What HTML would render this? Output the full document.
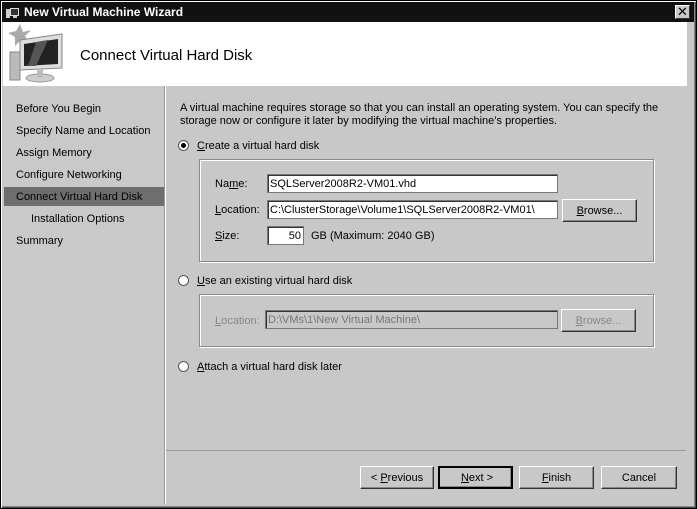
<!DOCTYPE html>
<html><head><style>
*{margin:0;padding:0;box-sizing:border-box}
body{width:697px;height:509px;background:#c8c8c8;font-family:"Liberation Sans","DejaVu Sans",sans-serif;font-size:11px;color:#000;position:relative;overflow:hidden}
.a{position:absolute}
.frame{left:0;top:0;width:697px;height:509px;border:1px solid #000;box-shadow:inset 1px 1px 0 #fff,inset -1px -1px 0 #444,inset -2px -2px 0 #888}
.title{left:2px;top:2px;width:692px;height:20px;background:#111;color:#fff;font-weight:bold;font-size:12px;line-height:21px;padding-left:22px}
.hdr{left:3px;top:22px;width:684px;height:64px;background:#fff}
.side{left:4px;top:86px;width:160px;height:418px;background:#c9c9c9}
.vd{left:164px;top:86px;width:2px;height:418px;background:#fff;border-left:1px solid #999}
.nav{left:16px}
.sel{left:4px;top:187px;width:160px;height:19px;background:#6e6e6e}
.inp{background:#fff;border:1px solid #777;box-shadow:inset 1px 1px 0 #333;height:19px;padding-left:2px;line-height:18px;font-size:11px}
.btn{background:#c8c8c8;border:1px solid;border-color:#fff #333 #333 #fff;box-shadow:inset -1px -1px 0 #888;text-align:center;line-height:22px;height:23px;font-size:11px}
.grp{border:1px solid #888;box-shadow:1px 1px 0 #fff,inset 1px 1px 0 #fff}
.rad{width:11px;height:11px;border-radius:50%;background:#fff;border:1px solid #555}
u{text-decoration:underline}
</style></head><body>
<div class="a frame"></div>
<div class="a title">New Virtual Machine Wizard</div>
<svg class="a" style="left:5px;top:5px" width="16" height="15"><rect x="1" y="4" width="4" height="9" fill="#ccc"/><rect x="5" y="3" width="9" height="8" fill="#ddd"/><rect x="6" y="4" width="7" height="6" fill="#333"/><rect x="8" y="11" width="4" height="2" fill="#ccc"/></svg>
<div class="a" style="left:675px;top:5px;width:15px;height:14px;background:#c8c8c8;border:1px solid;border-color:#fff #333 #333 #fff;font-size:13px;line-height:11px;text-align:center;font-weight:bold">✕</div>
<div class="a hdr"></div>
<svg class="a" style="left:6px;top:22px" width="60" height="62">
<polygon points="14,2 17,10 25,8 19,14 23,21 15,18 9,24 9,15 2,11 10,9" fill="#aaa"/>
<rect x="4" y="30" width="10" height="28" fill="#bbb" stroke="#888"/>
<polygon points="14,18 56,12 56,46 14,48" fill="#ddd" stroke="#888"/>
<polygon points="18,22 52,17 52,42 18,44" fill="#222"/>
<polygon points="30,20 42,18 30,44 22,44" fill="#555"/>
<ellipse cx="34" cy="56" rx="14" ry="4" fill="#ccc" stroke="#999"/>
<rect x="31" y="47" width="6" height="8" fill="#bbb"/>
</svg>
<div class="a" style="left:80px;top:47px;font-size:15px">Connect Virtual Hard Disk</div>
<div class="a side"></div>
<div class="a sel"></div>
<div class="a vd"></div>
<div class="a nav" style="top:103px">Before You Begin</div>
<div class="a nav" style="top:125px">Specify Name and Location</div>
<div class="a nav" style="top:147px">Assign Memory</div>
<div class="a nav" style="top:169px">Configure Networking</div>
<div class="a nav" style="top:191px">Connect Virtual Hard Disk</div>
<div class="a" style="left:31px;top:213px">Installation Options</div>
<div class="a nav" style="top:235px">Summary</div>

<div class="a" style="left:180px;top:102px;width:490px;line-height:13px">A virtual machine requires storage so that you can install an operating system. You can specify the storage now or configure it later by modifying the virtual machine’s properties.</div>
<div class="a rad" style="left:178px;top:140px"><div style="width:5px;height:5px;border-radius:50%;background:#000;margin:2px"></div></div>
<div class="a" style="left:197px;top:140px"><u>C</u>reate a virtual hard disk</div>
<div class="a grp" style="left:199px;top:159px;width:455px;height:103px"></div>
<div class="a" style="left:215px;top:178px">Na<u>m</u>e:</div>
<div class="a inp" style="left:267px;top:174px;width:291px">SQLServer2008R2-VM01.vhd</div>
<div class="a" style="left:215px;top:204px"><u>L</u>ocation:</div>
<div class="a inp" style="left:267px;top:200px;width:291px">C:\ClusterStorage\Volume1\SQLServer2008R2-VM01\</div>
<div class="a btn" style="left:562px;top:199px;width:75px"><u>B</u>rowse...</div>
<div class="a" style="left:215px;top:230px"><u>S</u>ize:</div>
<div class="a inp" style="left:267px;top:226px;width:37px;text-align:right;padding-right:2px">50</div>
<div class="a" style="left:311px;top:230px">GB (Maximum: 2040 GB)</div>

<div class="a rad" style="left:178px;top:275px"></div>
<div class="a" style="left:197px;top:275px"><u>U</u>se an existing virtual hard disk</div>
<div class="a grp" style="left:199px;top:294px;width:455px;height:53px"></div>
<div class="a" style="left:215px;top:315px;color:#888"><u>L</u>ocation:</div>
<div class="a inp" style="left:265px;top:310px;width:293px;background:#c8c8c8;color:#777">D:\VMs\1\New Virtual Machine\</div>
<div class="a btn" style="left:561px;top:309px;width:75px;color:#888"><u>B</u>rowse...</div>

<div class="a rad" style="left:178px;top:361px"></div>
<div class="a" style="left:197px;top:361px"><u>A</u>ttach a virtual hard disk later</div>

<div class="a" style="left:166px;top:450px;width:520px;height:1px;background:#fff;border-top:1px solid #999"></div>
<div class="a btn" style="left:360px;top:466px;width:74px">&lt; <u>P</u>revious</div>
<div class="a btn" style="left:438px;top:466px;width:75px;border:2px solid #000;line-height:20px">&nbsp;<u>N</u>ext &gt;</div>
<div class="a btn" style="left:519px;top:466px;width:75px"><u>F</u>inish</div>
<div class="a btn" style="left:601px;top:466px;width:76px">Cancel</div>
</body></html>
